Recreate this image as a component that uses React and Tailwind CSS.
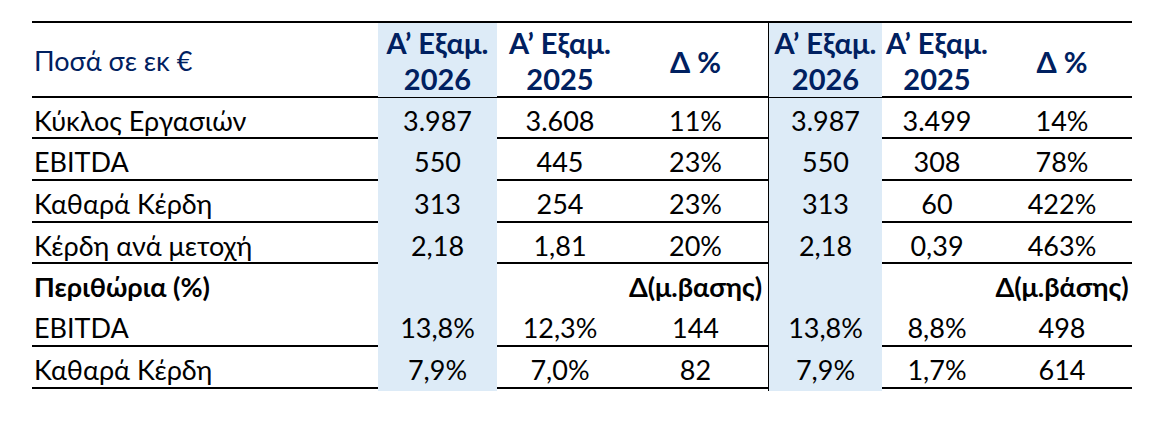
import React from 'react';

const cols = 'grid grid-cols-[346px_119px_126px_146px_113px_110px_140px]';
const font = { fontFamily: '"Lato", "Open Sans", sans-serif' };

const rows = [
  ['Κύκλος Εργασιών', '3.987', '3.608', '11%', '3.987', '3.499', '14%'],
  ['EBITDA', '550', '445', '23%', '550', '308', '78%'],
  ['Καθαρά Κέρδη', '313', '254', '23%', '313', '60', '422%'],
  ['Κέρδη ανά μετοχή', '2,18', '1,81', '20%', '2,18', '0,39', '463%'],
];

const margins = [
  { cells: ['Περιθώρια (%)', '', '', 'Δ(μ.βασης)', '', '', 'Δ(μ.βάσης)'], bold: true, line: false, h: 'h-[41px]' },
  { cells: ['EBITDA', '13,8%', '12,3%', '144', '13,8%', '8,8%', '498'], line: true, h: 'h-[42px]' },
  { cells: ['Καθαρά Κέρδη', '7,9%', '7,0%', '82', '7,9%', '1,7%', '614'], line: true, h: 'h-[42px]' },
];

const cellClass = (i) => {
  let c = 'flex items-center pt-[3px] whitespace-nowrap ';
  if (i === 0) c += 'pl-[2px] ';
  else c += 'justify-center ';
  if (i === 1 || i === 4) c += 'bg-[#DDEBF7] ';
  if (i === 3) c += 'border-r border-black ';
  return c;
};

const Row = ({ cells, bold, line = true, h }) => (
  <div className={`${cols} ${h} ${line ? 'border-b-2 border-black' : ''} ${bold ? 'font-bold' : ''} text-[27px] text-black`}>
    {cells.map((c, i) => (
      <div key={i} className={cellClass(i)}>{c}</div>
    ))}
  </div>
);

const HeadCell = ({ top, bottom }) => (
  <div className="flex flex-col items-center justify-center leading-[36px] pt-[2px]">
    <span>{top}</span>
    <span>{bottom}</span>
  </div>
);

export default function App() {
  return (
    <div className="w-[1166px] h-[424px] bg-white pt-[21px] pl-[32px]" style={font}>
      <div className="w-[1100px] border-t-2 border-black">
        {/* header */}
        <div className={`${cols} h-[75px] border-b-2 border-black text-[#002060]`}>
          <div className="flex items-center pl-[2px] pt-[3px] text-[27px]">Ποσά σε εκ €</div>
          <div className="bg-[#DDEBF7] flex justify-center font-bold text-[29px]">
            <HeadCell top="Α’ Εξαμ." bottom="2026" />
          </div>
          <div className="flex justify-center font-bold text-[29px]">
            <HeadCell top="Α’ Εξαμ." bottom="2025" />
          </div>
          <div className="flex items-center justify-center pt-[3px] font-bold text-[29px] border-r border-black">Δ %</div>
          <div className="bg-[#DDEBF7] flex justify-center font-bold text-[29px]">
            <HeadCell top="Α’ Εξαμ." bottom="2026" />
          </div>
          <div className="flex justify-center font-bold text-[29px]">
            <HeadCell top="Α’ Εξαμ." bottom="2025" />
          </div>
          <div className="flex items-center justify-center pt-[3px] font-bold text-[29px]">Δ %</div>
        </div>

        {rows.map((r, i) => (
          <Row key={i} cells={r} h={i === 0 || i === 3 ? 'h-[41px]' : 'h-[42px]'} />
        ))}

        {margins.map((m, i) => (
          <Row key={i} cells={m.cells} bold={m.bold} line={m.line} h={m.h} />
        ))}
      </div>
    </div>
  );
}
